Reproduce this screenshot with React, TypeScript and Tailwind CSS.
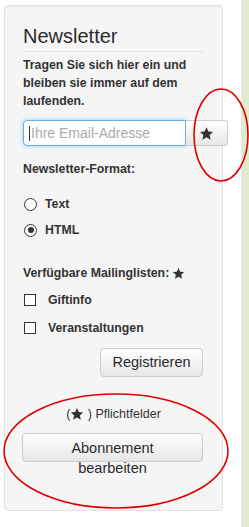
import React from "react";

const Star = ({ size = 14 }: { size?: number }) => (
  <svg width={size} height={size} viewBox="0 0 24 24" className="inline-block">
    <path
      d="M12 1.8l3.1 6.9 7.4.7-5.6 5 1.7 7.4L12 17.9 5.4 21.8l1.7-7.4-5.6-5 7.4-.7z"
      fill="#333"
    />
  </svg>
);

export default function App() {
  return (
    <div
      className="relative w-[249px] h-[527px] bg-white overflow-hidden text-[#333]"
      style={{ fontFamily: '"Liberation Sans", Arial, sans-serif' }}
    >
      <div className="flex h-full">
        <div className="w-[238px] pl-[4px] pt-[5px]">
          <div className="w-[219px] h-[506px] bg-[#f5f5f5] border border-[#e3e3e3] rounded-[4px] shadow-[inset_0_1px_1px_rgba(0,0,0,0.05)] pl-[18px] pr-[18px] pt-[18px]">
            <h3 className="text-[20px] leading-[24px] font-normal text-[#2a2a2a] pb-[3px] border-b border-[#e5e5e5]">
              Newsletter
            </h3>
            <p className="mt-[4px] text-[12.3px] leading-[18px] font-bold">
              Tragen Sie sich hier ein und bleiben sie immer auf dem laufenden.
            </p>
            <div className="mt-[10px] flex w-[205px] h-[26px]">
              <div className="w-[163px] h-full border border-[#66afe9] rounded-l-[4px] bg-white shadow-[0_0_4px_rgba(102,175,233,0.6)] flex items-center pl-[5px]">
                <span className="w-px h-[15px] bg-[#333]" />
                <span className="text-[14px] text-[#aaa] ml-[1px]">Ihre Email-Adresse</span>
              </div>
              <div className="w-[42px] h-full border border-[#ccc] border-l-0 rounded-r-[4px] bg-gradient-to-b from-white to-[#e6e6e6] flex items-center justify-center">
                <Star size={15} />
              </div>
            </div>
            <div className="mt-[14px] text-[12.3px] font-bold leading-[18px]">Newsletter-Format:</div>
            <div className="mt-[17px] flex items-center gap-[8px] text-[12.3px] font-bold leading-[18px]">
              <span className="w-[13px] h-[13px] rounded-full border border-[#333] bg-white ml-[1px]" />
              <span>Text</span>
            </div>
            <div className="mt-[8px] flex items-center gap-[8px] text-[12.3px] font-bold leading-[18px]">
              <span className="w-[13px] h-[13px] rounded-full border border-[#333] bg-white ml-[1px] flex items-center justify-center">
                <span className="w-[6px] h-[6px] rounded-full bg-[#333]" />
              </span>
              <span>HTML</span>
            </div>
            <div className="mt-[25px] flex items-center gap-[3px] text-[12.3px] font-bold leading-[18px]">
              <span>Verfügbare Mailinglisten:</span>
              <Star size={13} />
            </div>
            <div className="mt-[9px] flex items-center gap-[12px] text-[12.3px] font-bold leading-[18px]">
              <span className="w-[12px] h-[12px] border border-[#333] bg-white ml-[1px]" />
              <span>Giftinfo</span>
            </div>
            <div className="mt-[10px] flex items-center gap-[12px] text-[12.3px] font-bold leading-[18px]">
              <span className="w-[12px] h-[12px] border border-[#333] bg-white ml-[1px]" />
              <span>Veranstaltungen</span>
            </div>
            <div className="mt-[11px] flex justify-end pr-[1px]">
              <div className="w-[103px] h-[29px] border border-[#ccc] rounded-[4px] bg-gradient-to-b from-white to-[#e6e6e6] flex items-center justify-center text-[14.5px] text-[#2a2a2a]">
                Registrieren
              </div>
            </div>
            <div className="mt-[28px] flex items-center justify-center text-[12.5px] leading-[18px]">
              <span>(</span>
              <Star size={14} />
              <span>&nbsp;) Pflichtfelder</span>
            </div>
            <div className="mt-[10px] w-[181px] h-[29px] border border-[#ccc] rounded-[4px] bg-gradient-to-b from-white to-[#e6e6e6] text-center text-[14.5px] leading-[20px] pt-[4px] -ml-[1px] text-[#2a2a2a]">
              Abonnement
              <br />
              bearbeiten
            </div>
          </div>
        </div>
        <div className="w-[4px] border-r border-[#e8e8e8]" />
        <div className="flex-1 bg-[#dfebcf]" />
      </div>
      <svg className="absolute inset-0 pointer-events-none" width="249" height="527">
        <ellipse cx="221" cy="135" rx="27" ry="46" fill="none" stroke="#e00000" strokeWidth="1.6" />
        <ellipse cx="116" cy="451" rx="112" ry="57" fill="none" stroke="#e00000" strokeWidth="1.6" />
      </svg>
    </div>
  );
}
